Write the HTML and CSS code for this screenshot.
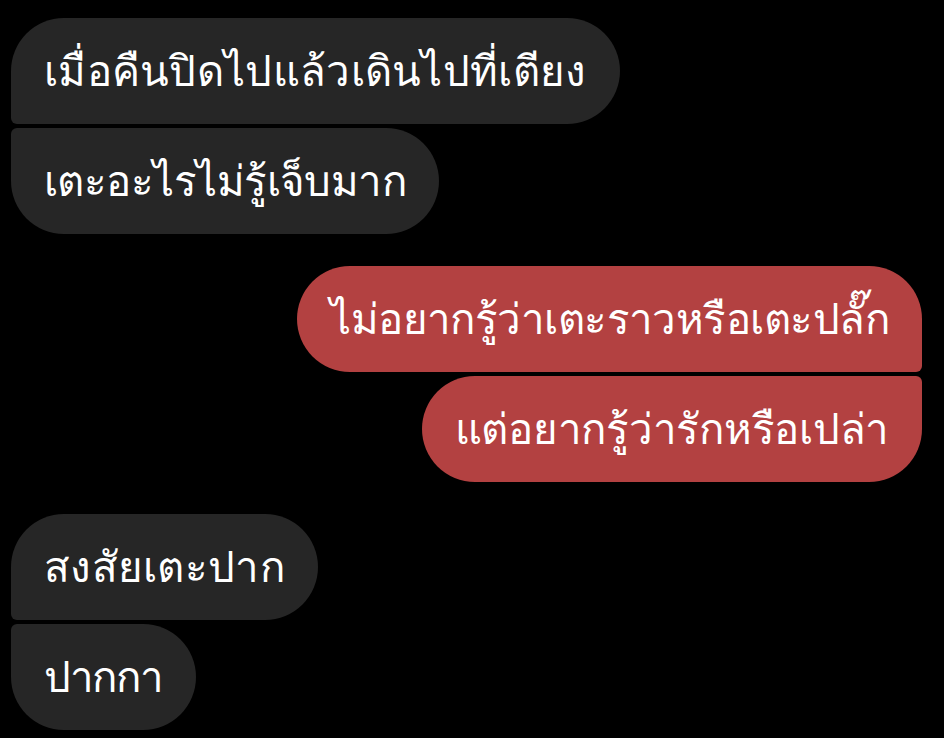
FILE: index.html
```html
<!DOCTYPE html>
<html lang="th">
<head>
<meta charset="utf-8">
<link rel="stylesheet" href="styles.css">
</head>
<body>
<div class="chat">
  <div class="group in">
    <div class="bubble first">เมื่อคืนปิดไปแล้วเดินไปที่เตียง</div>
    <div class="bubble last tight">เตะอะไรไม่รู้เจ็บมาก</div>
  </div>
  <div class="group out">
    <div class="bubble first tight">ไม่อยากรู้ว่าเตะราวหรือเตะปลั๊ก</div>
    <div class="bubble last snug">แต่อยากรู้ว่ารักหรือเปล่า</div>
  </div>
  <div class="group in">
    <div class="bubble first">สงสัยเตะปาก</div>
    <div class="bubble last tighter">ปากกา</div>
  </div>
</div>
</body>
</html>
```

FILE: styles.css
```css
html, body {
  margin: 0;
  padding: 0;
  background: #000;
}
body {
  width: 944px;
  height: 738px;
  overflow: hidden;
  font-family: "Noto Sans", "DejaVu Sans", sans-serif;
}
.chat {
  display: flex;
  flex-direction: column;
  gap: 32px;
  padding: 18px 22px 0 11px;
}
.group {
  display: flex;
  flex-direction: column;
  gap: 4px;
}
.group.in { align-items: flex-start; }
.group.out { align-items: flex-end; }
.bubble {
  height: 106px;
  box-sizing: border-box;
  display: flex;
  align-items: center;
  padding: 0 33px;
  font-size: 42px;
  letter-spacing: 0.3px;
  color: #fff;
  white-space: nowrap;
  border-radius: 53px;
}
.bubble.snug { letter-spacing: -0.25px; }
.bubble.tight { letter-spacing: -0.55px; }
.bubble.tighter { letter-spacing: -1.3px; }
.in .bubble { background: #262626; }
.out .bubble { background: #b34141; }
.in .first { border-bottom-left-radius: 6px; }
.in .last { border-top-left-radius: 6px; }
.out .first { border-bottom-right-radius: 6px; }
.out .last { border-top-right-radius: 6px; }
```
